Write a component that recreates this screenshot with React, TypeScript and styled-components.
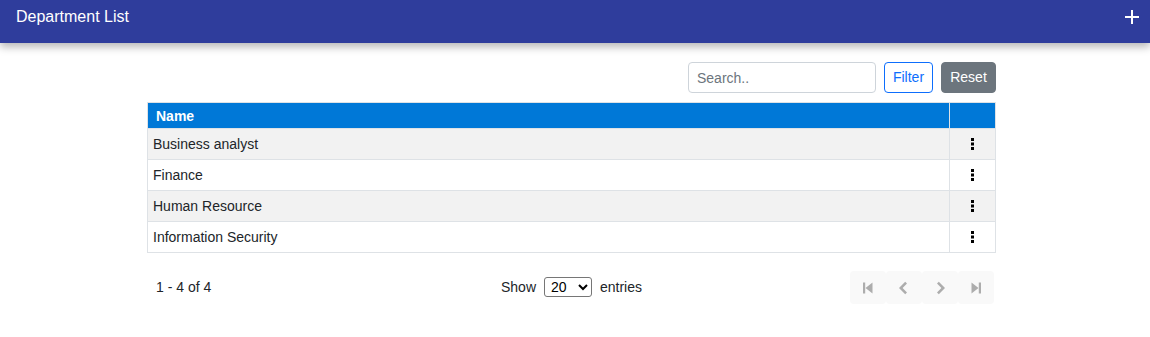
import styled, { createGlobalStyle } from "styled-components";

const Global = createGlobalStyle`
  body {
    margin: 0;
    font-family: "Liberation Sans", Arial, sans-serif;
    background: #fff;
    color: #212529;
  }
`;

const TopBar = styled.header`
  height: 43px;
  background: #2f3d9c;
  box-shadow: 0 4px 8px rgba(0, 0, 0, 0.28);
  display: flex;
  align-items: center;
  justify-content: space-between;
  padding: 0 11px 0 16px;
  color: #fff;
  position: relative;
`;

const Title = styled.h1`
  margin: 0 0 9px;
  font-size: 16px;
  font-weight: normal;
  line-height: 18px;
`;

const AddButton = styled.button`
  width: 14px;
  height: 14px;
  padding: 0;
  margin-bottom: 9px;
  border: none;
  background: none;
  display: flex;
  cursor: pointer;
`;

const Content = styled.main`
  width: 849px;
  margin: 19px 0 0 147px;
`;

const Toolbar = styled.div`
  display: flex;
  justify-content: flex-end;
  gap: 8px;
  margin-bottom: 9px;
`;

const Search = styled.input`
  width: 188px;
  height: 31px;
  box-sizing: border-box;
  border: 1px solid #ced4da;
  border-radius: 4px;
  padding: 0 8px;
  font-family: inherit;
  font-size: 14px;
  color: #212529;
  &::placeholder {
    color: #6c757d;
  }
`;

const Button = styled.button<{ $variant: "outline" | "grey" }>`
  height: 31px;
  width: ${(p) => (p.$variant === "outline" ? "49px" : "55px")};
  box-sizing: border-box;
  border-radius: 4px;
  font-family: inherit;
  font-size: 14px;
  padding: 0 0 2px;
  border: 1px solid ${(p) => (p.$variant === "outline" ? "#0d6efd" : "#6c757d")};
  background: ${(p) => (p.$variant === "outline" ? "#fff" : "#6c757d")};
  color: ${(p) => (p.$variant === "outline" ? "#0d6efd" : "#fff")};
`;

const Table = styled.table`
  width: 100%;
  border-collapse: collapse;
  font-size: 14px;
`;

const Th = styled.th`
  background: #0078d7;
  color: #fff;
  font-weight: bold;
  text-align: left;
  height: 25px;
  padding: 0 8px;
  border: 1px solid #dee2e6;
  border-bottom: none;
  &:last-child {
    width: 45px;
    padding: 0;
  }
`;

const Row = styled.tr<{ $striped: boolean }>`
  background: ${(p) => (p.$striped ? "#f2f2f2" : "#fff")};
`;

const Td = styled.td`
  height: 30px;
  padding: 0 5px;
  border: 1px solid #dee2e6;
  color: #212529;
`;

const ActionCell = styled(Td)`
  text-align: center;
  padding: 0;
`;

const MenuDots = styled.span`
  display: inline-flex;
  vertical-align: middle;
  margin-bottom: 2px;
`;

const Footer = styled.div`
  display: grid;
  grid-template-columns: 1fr auto 1fr;
  align-items: center;
  margin-top: 18px;
  font-size: 14px;
`;

const Count = styled.span`
  padding-left: 9px;
  padding-bottom: 2px;
`;

const PageSize = styled.div`
  display: flex;
  align-items: center;
  gap: 8px;
  padding-bottom: 2px;
`;

const Select = styled.select`
  width: 48px;
  height: 20px;
  font-family: inherit;
  font-size: 14px;
  border: 1px solid #767676;
  border-radius: 3px;
  padding: 0 0 0 2px;
  background: #fff;
  color: #000;
`;

const Pager = styled.div`
  display: flex;
  justify-content: flex-end;
  padding-right: 2px;
`;

const PageButton = styled.button`
  width: 36px;
  height: 33px;
  border: none;
  border-radius: 4px;
  background: #f9f9f9;
  display: flex;
  align-items: center;
  justify-content: center;
  padding: 0;
`;

const Plus = () => (
  <svg width="14" height="14" viewBox="0 0 14 14">
    <rect x="6" y="0" width="2" height="14" fill="#fff" />
    <rect x="0" y="6" width="14" height="2" fill="#fff" />
  </svg>
);

const Dots = () => (
  <svg width="3" height="12" viewBox="0 0 3 12">
    <rect x="0" y="0" width="3" height="3" fill="#000" />
    <rect x="0" y="4.5" width="3" height="3" fill="#000" />
    <rect x="0" y="9" width="3" height="3" fill="#000" />
  </svg>
);

const icons = {
  first: "M3 2.5h2.2v11H3z M12.5 2.5v11L5.5 8z",
  prev: "M11 3.6L6.6 8l4.4 4.4-1.8 1.8L3 8l6.2-6.2z",
  next: "M5 3.6L9.4 8 5 12.4l1.8 1.8L13 8 6.8 1.8z",
  last: "M10.8 2.5H13v11h-2.2z M3.5 2.5v11l7-5.5z",
};

const PagerIcon = ({ d }: { d: string }) => (
  <svg width="16" height="16" viewBox="0 0 16 16">
    <path d={d} fill="#adadad" />
  </svg>
);

const departments = ["Business analyst", "Finance", "Human Resource", "Information Security"];

export default function App() {
  return (
    <>
      <Global />
      <TopBar>
        <Title>Department List</Title>
        <AddButton aria-label="Add">
          <Plus />
        </AddButton>
      </TopBar>
      <Content>
        <Toolbar>
          <Search placeholder="Search.." />
          <Button $variant="outline">Filter</Button>
          <Button $variant="grey">Reset</Button>
        </Toolbar>
        <Table>
          <thead>
            <tr>
              <Th>Name</Th>
              <Th></Th>
            </tr>
          </thead>
          <tbody>
            {departments.map((name, i) => (
              <Row key={name} $striped={i % 2 === 0}>
                <Td>{name}</Td>
                <ActionCell>
                  <MenuDots>
                    <Dots />
                  </MenuDots>
                </ActionCell>
              </Row>
            ))}
          </tbody>
        </Table>
        <Footer>
          <Count>1 - 4 of 4</Count>
          <PageSize>
            Show
            <Select defaultValue="20">
              <option>10</option>
              <option>20</option>
              <option>50</option>
            </Select>
            entries
          </PageSize>
          <Pager>
            <PageButton><PagerIcon d={icons.first} /></PageButton>
            <PageButton><PagerIcon d={icons.prev} /></PageButton>
            <PageButton><PagerIcon d={icons.next} /></PageButton>
            <PageButton><PagerIcon d={icons.last} /></PageButton>
          </Pager>
        </Footer>
      </Content>
    </>
  );
}
